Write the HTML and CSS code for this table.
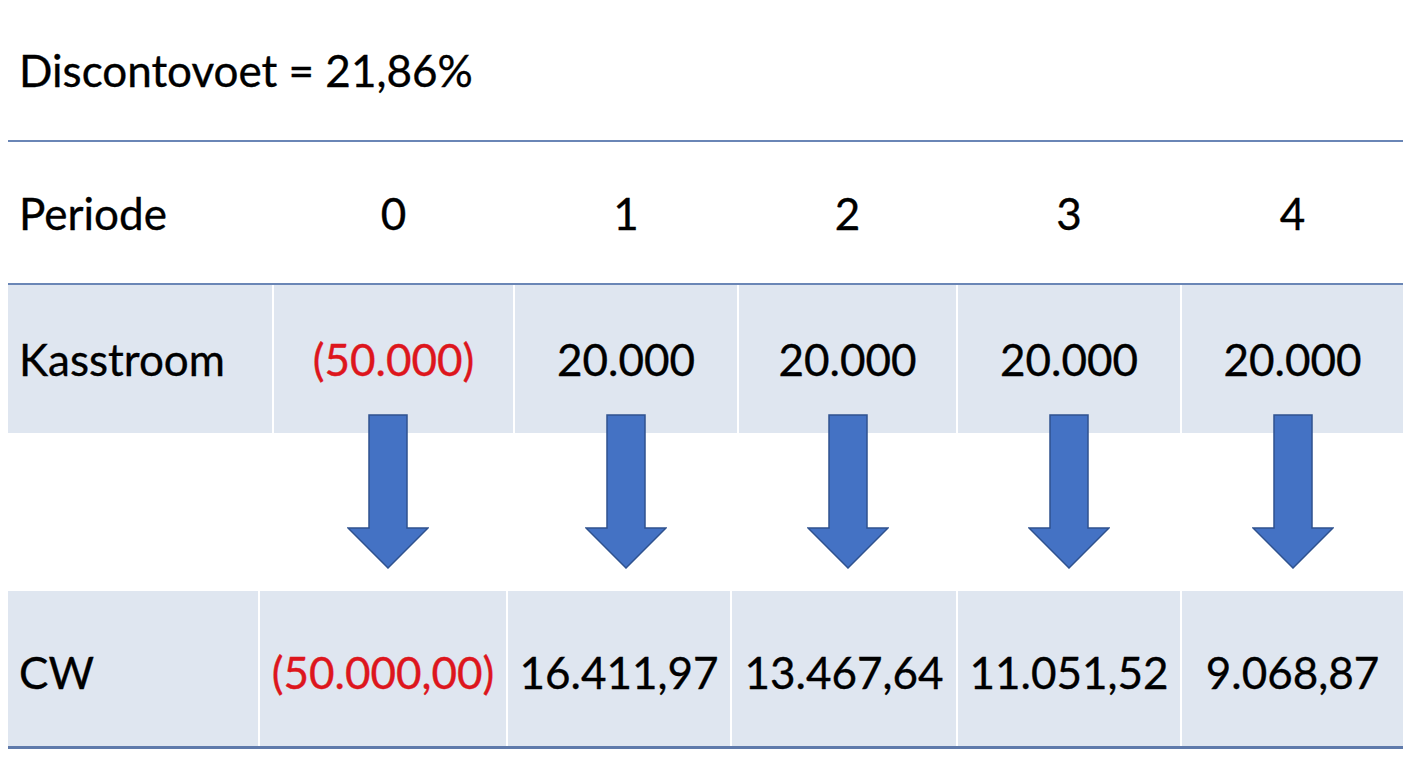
FILE: index.html
```html
<!DOCTYPE html>
<html lang="nl">
<head>
<meta charset="utf-8">
<title>Discontovoet</title>
<link rel="stylesheet" href="styles.css">
</head>
<body>
<div class="slide">
  <div class="title">Discontovoet = 21,86%</div>

  <div class="row period">
    <div class="cell label">Periode</div>
    <div class="cell">0</div>
    <div class="cell">1</div>
    <div class="cell">2</div>
    <div class="cell">3</div>
    <div class="cell">4</div>
  </div>

  <div class="row cash">
    <div class="cell label">Kasstroom</div>
    <div class="cell neg">(50.000)</div>
    <div class="cell">20.000</div>
    <div class="cell">20.000</div>
    <div class="cell">20.000</div>
    <div class="cell">20.000</div>
  </div>

  <div class="row arrows">
    <div class="acell"></div>
    <div class="acell first"><svg class="arrow" viewBox="0 0 82 155" width="82" height="155"><polygon points="22,1 60,1 60,114 81,114 41,154 1,114 22,114"/></svg></div>
    <div class="acell"><svg class="arrow" viewBox="0 0 82 155" width="82" height="155"><polygon points="22,1 60,1 60,114 81,114 41,154 1,114 22,114"/></svg></div>
    <div class="acell"><svg class="arrow" viewBox="0 0 82 155" width="82" height="155"><polygon points="22,1 60,1 60,114 81,114 41,154 1,114 22,114"/></svg></div>
    <div class="acell"><svg class="arrow" viewBox="0 0 82 155" width="82" height="155"><polygon points="22,1 60,1 60,114 81,114 41,154 1,114 22,114"/></svg></div>
    <div class="acell"><svg class="arrow" viewBox="0 0 82 155" width="82" height="155"><polygon points="22,1 60,1 60,114 81,114 41,154 1,114 22,114"/></svg></div>
  </div>

  <div class="row cw">
    <div class="cell label">CW</div>
    <div class="cell neg">(50.000,00)</div>
    <div class="cell">16.411,97</div>
    <div class="cell">13.467,64</div>
    <div class="cell">11.051,52</div>
    <div class="cell">9.068,87</div>
  </div>
</div>
</body>
</html>
```

FILE: styles.css
```css
html, body {
  margin: 0;
  padding: 0;
  background: #ffffff;
}

body {
  width: 1408px;
  height: 768px;
  overflow: hidden;
  font-family: Lato, "Open Sans", "Liberation Sans", sans-serif;
  color: #000000;
  -webkit-text-stroke: 0.35px currentColor;
}

.slide {
  padding: 0 5px 0 8px;
  display: flex;
  flex-direction: column;
}

.title {
  height: 140px;
  display: flex;
  align-items: center;
  padding-left: 11px;
  font-size: 44px;
  border-bottom: 2px solid #6a86b6;
}

.row {
  display: grid;
  column-gap: 2px;
}

.period,
.cash,
.arrows {
  grid-template-columns: 264px 239px 222px 217px 222px 221px;
}

.cw {
  grid-template-columns: 250px 246px 222px 224px 222px 221px;
}

.cell {
  display: flex;
  align-items: center;
  justify-content: center;
  font-size: 44px;
  white-space: nowrap;
}

.cell.label {
  justify-content: flex-start;
  padding-left: 11px;
}

.period {
  height: 141px;
  border-bottom: 2px solid #6a86b6;
}

.cash {
  height: 148px;
}

.cash .cell,
.cw .cell {
  background: #dfe6f0;
}

.neg {
  color: #dd161d;
}

.arrows {
  height: 158px;
  align-items: start;
}

.acell {
  display: flex;
  justify-content: center;
}

.acell.first {
  padding-right: 12px;
}

.arrow {
  display: block;
  margin-top: -19px;
  position: relative;
}

.arrow polygon {
  fill: #4472c4;
  stroke: #2f528f;
  stroke-width: 1.5;
  stroke-linejoin: miter;
}

.cw {
  height: 155px;
  border-bottom: 3px solid #5f7aab;
}

.cw .cell {
  padding-top: 6px;
}
```
